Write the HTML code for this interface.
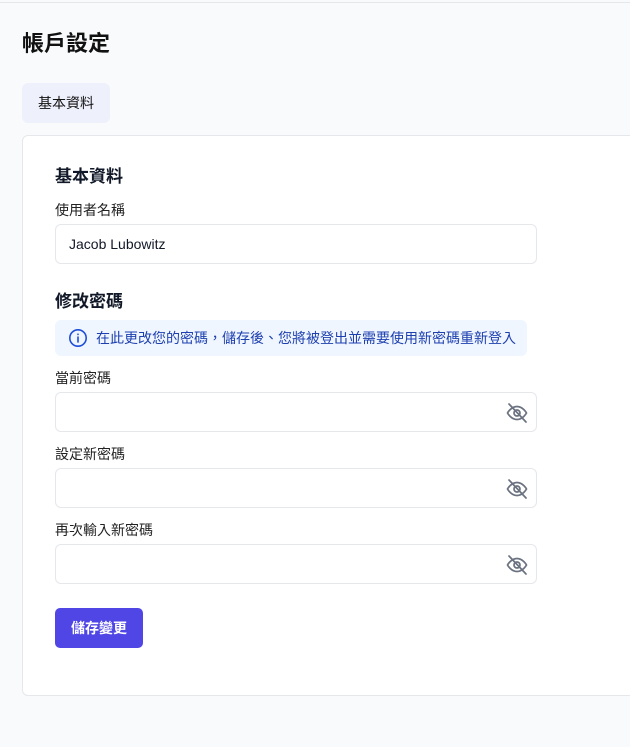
<!DOCTYPE html>
<html><head><meta charset="utf-8"><style>
*{box-sizing:border-box;margin:0;padding:0}
body{width:630px;height:747px;background:#f9fafb;font-family:"Liberation Sans","Noto Sans CJK TC",sans-serif;color:#111827;position:relative;overflow:hidden}
.a{position:absolute}
.top{left:0;top:2px;width:630px;height:1px;background:#e5e7eb}
h1{position:absolute;left:22px;top:26px;font-size:22px;font-weight:700;color:#111}
.tab{left:22px;top:83px;width:88px;height:40px;background:#eef0fc;border-radius:6px;font-size:14px;line-height:40px;text-align:center;color:#111}
.card{left:22px;top:135px;width:620px;height:561px;background:#fff;border:1px solid #e5e7eb;border-radius:6px}
.h2{font-size:17px;font-weight:700;left:55px}
.lbl{font-size:14px;left:55px;color:#222}
.inp{left:55px;width:482px;height:40px;border:1px solid #e5e7eb;border-radius:6px;background:#fff;font-size:14px;line-height:38px;padding-left:13px}
.eye{position:absolute;right:7px;top:8px}
.info{left:55px;top:320px;width:472px;height:36px;background:#eff6ff;border-radius:6px;font-size:14px;color:#1e40af;line-height:36px;padding-left:41px;white-space:nowrap}
.btn{left:55px;top:608px;width:88px;height:40px;background:#4f46e5;border-radius:5px;color:#fff;font-size:14px;font-weight:700;text-align:center;line-height:40px}
</style></head><body>
<div class="a top"></div>
<h1>帳戶設定</h1>
<div class="a tab">基本資料</div>
<div class="a card"></div>
<div class="a h2" style="top:162px">基本資料</div>
<div class="a lbl" style="top:200px">使用者名稱</div>
<div class="a inp" style="top:224px">Jacob Lubowitz</div>
<div class="a h2" style="top:287px">修改密碼</div>
<div class="a info"><svg class="a" style="left:13px;top:8px" width="20" height="20" viewBox="0 0 20 20" fill="none" stroke="#1d4ed8" stroke-width="1.6"><circle cx="10" cy="10" r="8.2"/><path d="M10 9v5M10 6.2v.3" stroke-linecap="round"/></svg>在此更改您的密碼，儲存後、您將被登出並需要使用新密碼重新登入</div>
<div class="a lbl" style="top:368px">當前密碼</div>
<div class="a inp" style="top:392px"><svg class="eye" width="24" height="24" viewBox="0 0 24 24" fill="none" stroke="#6b7280" stroke-width="1.7" stroke-linecap="round"><path d="M2.5 12s3.5-6.5 9.5-6.5S21.5 12 21.5 12s-3.5 6.5-9.5 6.5S2.5 12 2.5 12z"/><circle cx="12" cy="12" r="3"/><path d="M4 3l17 18"/></svg></div>
<div class="a lbl" style="top:444px">設定新密碼</div>
<div class="a inp" style="top:468px"><svg class="eye" width="24" height="24" viewBox="0 0 24 24" fill="none" stroke="#6b7280" stroke-width="1.7" stroke-linecap="round"><path d="M2.5 12s3.5-6.5 9.5-6.5S21.5 12 21.5 12s-3.5 6.5-9.5 6.5S2.5 12 2.5 12z"/><circle cx="12" cy="12" r="3"/><path d="M4 3l17 18"/></svg></div>
<div class="a lbl" style="top:520px">再次輸入新密碼</div>
<div class="a inp" style="top:544px"><svg class="eye" width="24" height="24" viewBox="0 0 24 24" fill="none" stroke="#6b7280" stroke-width="1.7" stroke-linecap="round"><path d="M2.5 12s3.5-6.5 9.5-6.5S21.5 12 21.5 12s-3.5 6.5-9.5 6.5S2.5 12 2.5 12z"/><circle cx="12" cy="12" r="3"/><path d="M4 3l17 18"/></svg></div>
<div class="a btn">儲存變更</div>
</body></html>
